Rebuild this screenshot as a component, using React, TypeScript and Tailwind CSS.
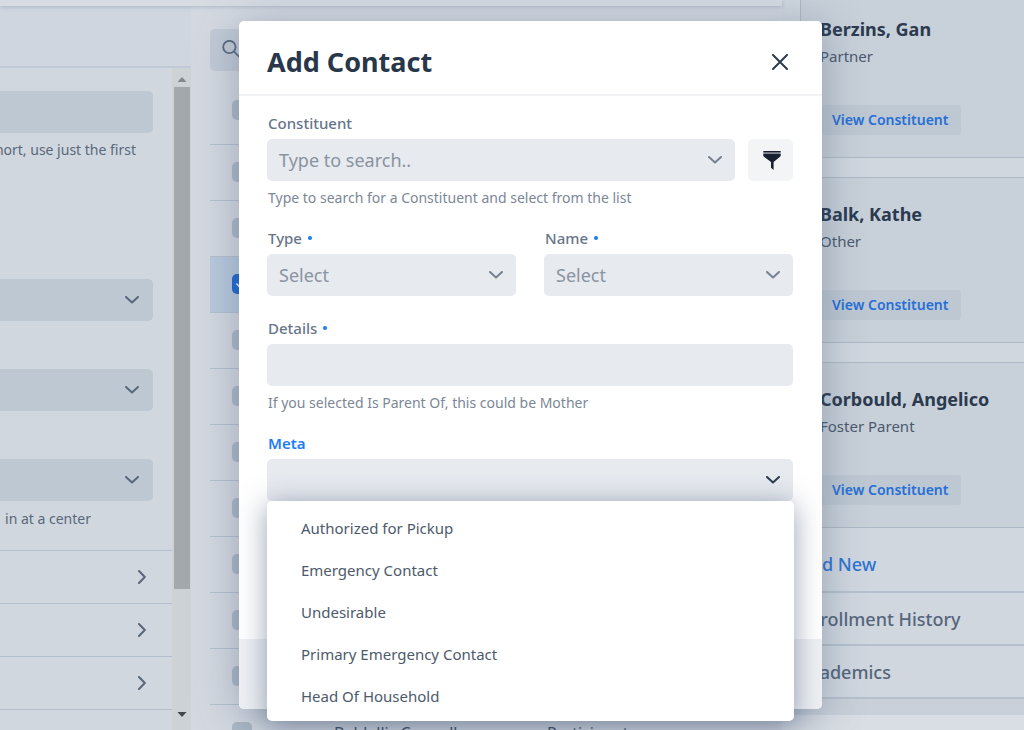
import React from "react";

type IconProps = { className?: string };

function ChevronDown({ className = "" }: IconProps) {
  return (
    <svg viewBox="0 0 14 8" fill="none" stroke="currentColor" strokeWidth="2" strokeLinecap="round" strokeLinejoin="round" className={`h-2 w-3.5 ${className}`} aria-hidden="true">
      <path d="M1 1l6 5.6L13 1" />
    </svg>
  );
}

function ChevronRight() {
  return (
    <svg viewBox="0 0 8 14" fill="none" stroke="currentColor" strokeWidth="2" strokeLinecap="round" strokeLinejoin="round" className="h-3.5 w-2" aria-hidden="true">
      <path d="M1 1l5.8 6L1 13" />
    </svg>
  );
}

function ArrowIcon({ down = false }: { down?: boolean }) {
  return (
    <svg viewBox="0 0 10 5" fill="currentColor" className="h-[5px] w-2.5" aria-hidden="true">
      <path d={down ? "M0.5 0h9L5 5z" : "M0.5 5h9L5 0z"} />
    </svg>
  );
}

function PanelSelect({ label }: { label: string }) {
  return (
    <div className="relative">
      <select aria-label={label} className="block h-[42px] w-full appearance-none rounded-[5px] bg-[#bdc8d2]" />
      <ChevronDown className="pointer-events-none absolute top-[17px] right-3.5 text-[#59677c]" />
    </div>
  );
}

function DetailsPanel() {
  return (
    <section className="flex w-[191px] shrink-0 flex-col bg-[#cfd6e0]">
      <div className="h-[62px] shrink-0 border-b-2 border-[#bfcad6]" />
      <div className="flex min-h-0 flex-1">
        <div className="w-[172px] shrink-0 overflow-hidden bg-[#d0d7df] text-sm text-[#5a687b]">
          <div className="h-[482px] pt-[23px] pr-[19px]">
            <input aria-label="Preferred name" className="-ml-2 block h-[42px] w-[161px] rounded-[5px] bg-[#bdc8d2]" />
            <p className="mt-[5px] flex h-6 w-[136px] items-center justify-end overflow-hidden whitespace-nowrap">hort, use just the first</p>
            <div className="-ml-2 flex flex-col gap-12 pt-[117px]">
              <PanelSelect label="Status" />
              <PanelSelect label="Program" />
              <PanelSelect label="Attendance" />
            </div>
            <p className="mt-1.5 flex h-6 w-[91px] items-center justify-end overflow-hidden whitespace-nowrap">in at a center</p>
          </div>
          {["Addresses", "Phones", "Notes"].map((name) => (
            <button key={name} type="button" aria-label={name} className="flex h-[53px] w-full items-center justify-end border-t border-[#b3bfcc] pr-[26px] text-[#59677c]">
              <ChevronRight />
            </button>
          ))}
          <div className="border-t border-[#b3bfcc]" />
        </div>
        <div className="flex flex-1 flex-col items-center justify-between bg-[#cdd2d5]">
          <div className="grid h-[19px] place-items-center pt-1 text-[#85898d]">
            <ArrowIcon />
          </div>
          <div className="w-4 flex-1 bg-[#a3a8ac]" />
          <div className="flex h-[141px] flex-col justify-end pb-[13px] text-[#41464b]">
            <ArrowIcon down />
          </div>
        </div>
      </div>
    </section>
  );
}

type Person = { name: string; role: string; selected?: boolean };

const people: Person[] = [
  { name: "", role: "" },
  { name: "", role: "" },
  { name: "", role: "", selected: true },
  { name: "", role: "" },
  { name: "", role: "" },
  { name: "", role: "" },
  { name: "", role: "" },
  { name: "", role: "" },
  { name: "", role: "" },
  { name: "", role: "" },
  { name: "Baldellis Connelly", role: "Participant" },
];

function Tick({ label, checked = false }: { label: string; checked?: boolean }) {
  return (
    <span className="grid size-5 place-items-center">
      <input type="checkbox" aria-label={label} defaultChecked={checked} className="col-start-1 row-start-1 size-5 appearance-none rounded-[5px] bg-[#adb9c6] checked:bg-[#1b67cf]" />
      {checked && (
        <svg viewBox="0 0 14 14" fill="none" stroke="#e6eefa" strokeWidth="2" strokeLinecap="round" className="pointer-events-none col-start-1 row-start-1 size-3" aria-hidden="true">
          <path d="M1 7l4 4 8-9" />
        </svg>
      )}
    </span>
  );
}

function PeopleList() {
  return (
    <section className="flex min-w-0 flex-1 flex-col overflow-hidden bg-[#d4d9e1] px-[19px] pt-[23px]">
      <div className="flex h-[42px] shrink-0 items-center rounded-[5px] bg-[#c2cad6] pl-3 text-[#5b697e]">
        <svg viewBox="0 0 20 20" fill="none" stroke="currentColor" strokeWidth="1.8" strokeLinecap="round" className="size-5" aria-hidden="true">
          <circle cx="7.4" cy="7" r="6.2" />
          <path d="M12 11.6l6.6 6.6" />
        </svg>
        <input aria-label="Search people" className="h-full min-w-0 flex-1 bg-transparent" />
      </div>
      <table className="w-full table-fixed border-separate border-spacing-0 text-base text-[#3f4e64]">
        <colgroup>
          <col className="w-[124px]" />
          <col className="w-[213px]" />
          <col />
        </colgroup>
        <thead>
          <tr>
            <th className="h-[74px] border-b border-[#b6c0cd] p-0 pt-1 pl-[22px]"><Tick label="Select all" /></th>
            <th className="border-b border-[#b6c0cd]" />
            <th className="border-b border-[#b6c0cd]" />
          </tr>
        </thead>
        <tbody>
          {people.map((p, i) => (
            <tr key={i} className={p.selected ? "bg-[#b9cadd]" : ""}>
              <td className="h-14 border-b border-[#b6c0cd] p-0 pb-0.5 pl-[22px]"><Tick label={`Select row ${i + 1}`} checked={p.selected} /></td>
              <td className="border-b border-[#b6c0cd] p-0">{p.name}</td>
              <td className="border-b border-[#b6c0cd] p-0">{p.role}</td>
            </tr>
          ))}
        </tbody>
      </table>
    </section>
  );
}

const contacts = [
  { name: "Berzins, Gan", relation: "Partner" },
  { name: "Balk, Kathe", relation: "Other" },
  { name: "Corbould, Angelico", relation: "Foster Parent" },
];

function ContactsPanel() {
  return (
    <aside className="flex w-[242px] shrink-0 flex-col overflow-hidden bg-[#d0d7df]">
      <div className="-mt-2 flex flex-col gap-[19px] pl-[18px]">
        {contacts.map((c) => (
          <article key={c.name} className="h-[166px] border-y border-l border-[#adb9c6] bg-[#c8d0d9] pt-[22px] pl-[19px]">
            <h3 className="h-7 text-lg font-bold text-[#2b3a4f]">{c.name}</h3>
            <p className="h-[26px] text-[15px] leading-[26px] text-[#4b596d]">{c.relation}</p>
            <button type="button" className="mt-9 h-[30px] rounded bg-[#bdc8d2] pr-[13px] pl-3 text-sm font-semibold text-[#276fd6]">View Constituent</button>
          </article>
        ))}
      </div>
      <a href="#add" className="flex h-[65px] shrink-0 items-center border-b-2 border-[#b6c1cd] pt-2 pl-[17px] text-lg font-medium text-[#2d73d4]">Add New</a>
      <button type="button" className="flex h-[53px] shrink-0 items-center border-b-2 border-[#b6c1cd] pl-[17px] text-lg font-medium text-[#56657b]">Enrollment History</button>
      <button type="button" className="flex h-[53px] shrink-0 items-center border-b-2 border-[#b6c1cd] pl-[17px] text-lg font-medium text-[#56657b]">Academics</button>
      <div className="h-4 shrink-0 bg-[#c9d0d9]" />
      <div className="flex-1 bg-[#d9dee4]" />
    </aside>
  );
}

function Dot() {
  return <span className="size-1 rounded-full bg-[#1a7af8]" />;
}

const labelClass = "mb-1 flex h-6 items-center gap-1.5 pl-px text-[15px] font-medium text-[#68768a]";
const boxClass = "block h-[42px] w-full appearance-none rounded-[5px] bg-[#e7eaef] pl-3 text-lg text-[#8a939f] outline-none placeholder:text-[#8a939f]";
const hintClass = "mt-[5px] h-6 pl-px text-sm leading-6 text-[#7c8796]";
const chevronClass = "pointer-events-none absolute top-[17px] right-[13px]";

function SelectField({ id, label }: { id: string; label: string }) {
  return (
    <div>
      <label htmlFor={id} className={labelClass}>{label} <Dot /></label>
      <div className="relative">
        <select id={id} className={boxClass}>
          <option>Select</option>
        </select>
        <ChevronDown className={`${chevronClass} text-[#758294]`} />
      </div>
    </div>
  );
}

const metaOptions = ["Authorized for Pickup", "Emergency Contact", "Undesirable", "Primary Emergency Contact", "Head Of Household"];

function AddContactDialog() {
  return (
    <div className="absolute inset-0 z-20 flex items-start justify-center pt-[21px] pl-[37px]">
      <form role="dialog" aria-labelledby="dialog-title" className="w-full max-w-[583px] rounded-[5px] bg-white shadow-[0_6px_44px_rgba(70,90,120,0.42)]">
        <header className="flex h-[75px] items-center justify-between border-b-2 border-[#f1f2f4] pt-2 pr-[34px] pl-7">
          <h2 id="dialog-title" className="text-[27px] leading-9 font-bold text-[#28374a]">Add Contact</h2>
          <button type="button" aria-label="Close" className="text-[#2c3b4e]">
            <svg viewBox="0 0 16 16" fill="none" stroke="currentColor" strokeWidth="2" strokeLinecap="round" className="size-4" aria-hidden="true">
              <path d="M1 1l14 14M15 1L1 15" />
            </svg>
          </button>
        </header>

        <div className="pt-[15px] pr-[29px] pb-[138px] pl-7">
          <div className="mb-4">
            <label htmlFor="constituent" className={labelClass}>Constituent</label>
            <div className="flex gap-[13px]">
              <div className="relative flex-1">
                <input id="constituent" type="text" placeholder="Type to search.." className={boxClass} />
                <ChevronDown className={`${chevronClass} text-[#758294]`} />
              </div>
              <button type="button" aria-label="Filter" className="grid w-[45px] place-items-center rounded-[5px] bg-[#f3f4f6] pl-0.5 text-[#17212f]">
                <svg viewBox="0 0 18 19" fill="currentColor" className="h-[19px] w-[18px]" aria-hidden="true">
                  <path d="M0.3 0h17.4v1.6H0.3z" />
                  <path d="M0.3 2.4h17.4v2.1c0 .5-.3.9-.7 1.3L10.6 11v8L8 16.8V11L1 5.8C.6 5.4.3 5 .3 4.5z" />
                </svg>
              </button>
            </div>
            <p className={hintClass}>Type to search for a Constituent and select from the list</p>
          </div>

          <div className="mb-5 grid grid-cols-2 gap-7">
            <SelectField id="type" label="Type" />
            <SelectField id="name" label="Name" />
          </div>

          <div className="mb-4">
            <label htmlFor="details" className={labelClass}>Details <Dot /></label>
            <input id="details" type="text" className={boxClass} />
            <p className={hintClass}>If you selected Is Parent Of, this could be Mother</p>
          </div>

          <div>
            <label htmlFor="meta" className="mb-1 flex h-6 items-center pl-px text-[15px] font-semibold text-[#1f7cf5]">Meta</label>
            <div className="relative">
              <button id="meta" type="button" aria-haspopup="listbox" aria-expanded="true" className={boxClass} />
              <ChevronDown className={`${chevronClass} text-[#2c3b4e]`} />
              <ul role="listbox" aria-labelledby="meta" className="absolute top-full -right-px left-0 rounded-[5px] bg-white pt-1.5 pb-1 text-[15px] text-[#4d5a6b] shadow-[0_4px_28px_rgba(50,70,105,0.5)]">
                {metaOptions.map((o) => (
                  <li key={o} role="option" aria-selected="false" className="flex h-[42px] items-center pl-[34px]">{o}</li>
                ))}
              </ul>
            </div>
          </div>
        </div>

        <footer className="h-[70px] rounded-b-[5px] bg-[#eef0f3]" />
      </form>
    </div>
  );
}

export default function App() {
  return (
    <div className="relative flex h-screen overflow-hidden bg-[#d4d9e1] font-['Noto_Sans','Open_Sans',sans-serif]">
      <div className="flex min-w-0 flex-1 flex-col">
        <div className="z-10 h-1.5 shrink-0 bg-[#d7dce2] shadow-[0_1px_4px_rgba(90,105,130,0.3)]" />
        <main className="flex min-h-0 flex-1">
          <DetailsPanel />
          <PeopleList />
        </main>
      </div>
      <ContactsPanel />
      <AddContactDialog />
    </div>
  );
}
